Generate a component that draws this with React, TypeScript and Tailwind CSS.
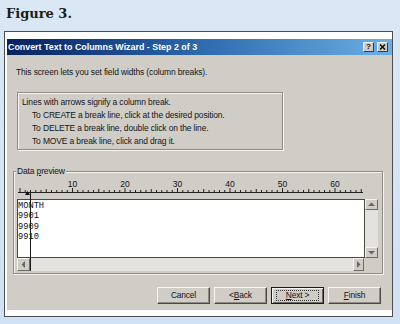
import React from "react";

const ui = { fontFamily: '"Liberation Sans", Arial, sans-serif' };
const mono = { fontFamily: '"Liberation Mono", "Courier New", monospace' };

function Ruler() {
  const ticks: React.ReactNode[] = [];
  const x0 = 3; // position 0 relative to svg (svg starts at x=17)
  const step = 5.25;
  for (let i = 0; i <= 65; i++) {
    const x = x0 + i * step;
    const h = i % 10 === 0 ? 4 : i % 5 === 0 ? 3 : 2;
    ticks.push(<line key={i} x1={x} x2={x} y1={14 - h} y2={14} stroke="#222" strokeWidth={1} />);
  }
  const labels = [10, 20, 30, 40, 50, 60];
  return (
    <svg width="361" height="21" className="block">
      <line x1={1} x2={346} y1={14.5} y2={14.5} stroke="#222" strokeWidth={1} />
      {ticks}
      {labels.map((n) => (
        <text key={n} x={x0 + n * step} y={9} textAnchor="middle" fontSize="8.5" fill="#111" style={ui}>
          {n}
        </text>
      ))}
      <polygon points="10.5,13 8,17 13,17" fill="#111" />
    </svg>
  );
}

function Arrow({ dir }: { dir: "up" | "down" | "left" | "right" }) {
  const pts =
    dir === "up" ? "1,5 4.5,1.5 8,5" : dir === "down" ? "1,2 4.5,5.5 8,2" : dir === "left" ? "5,1 1.5,4.5 5,8" : "2,1 5.5,4.5 2,8";
  const w = dir === "up" || dir === "down" ? 9 : 7;
  const h = dir === "up" || dir === "down" ? 7 : 9;
  return (
    <svg width={w} height={h} viewBox={`0 0 ${w} ${h}`}>
      <polygon points={pts} fill="#666" />
    </svg>
  );
}

function SBtn({ dir, cls }: { dir: "up" | "down" | "left" | "right"; cls: string }) {
  return (
    <div
      className={`flex items-center justify-center bg-[#d0cdc7] border border-t-[#f4f3f0] border-l-[#f4f3f0] border-r-[#6e6b66] border-b-[#6e6b66] ${cls}`}
    >
      <Arrow dir={dir} />
    </div>
  );
}

function Btn({ children, def }: { children: React.ReactNode; def?: boolean }) {
  return (
    <div
      className={`w-[53px] h-[17px] flex items-center justify-center text-[8.4px] text-[#111] bg-[#d0cdc7] ${
        def
          ? "border border-[#1a1a1a] shadow-[inset_1px_1px_0_#f6f5f2,inset_-1px_-1px_0_#6e6b66]"
          : "border border-t-[#f6f5f2] border-l-[#f6f5f2] border-r-[#4a4845] border-b-[#4a4845] shadow-[inset_-1px_-1px_0_#8e8b86]"
      }`}
      style={ui}
    >
      {def ? (
        <div className="w-[43px] h-[11px] border border-dotted border-[#333] flex items-center justify-center">{children}</div>
      ) : (
        children
      )}
    </div>
  );
}

export default function App() {
  return (
    <div className="w-[400px] h-[324px] overflow-hidden bg-gradient-to-b from-[#dae8f5] to-[#cfe1f2]">
      <div
        className="h-[31px] pl-[6px] pt-[5px] text-[13px] font-bold text-[#1c1c1c] leading-[18px]"
        style={{ fontFamily: '"DejaVu Serif", "Liberation Serif", serif' }}
      >
        Figure 3.
      </div>
      <div className="ml-[4px] w-[389px] border border-[#4f4f52] bg-white pt-[7px] pl-[2px] pb-[6px]">
        {/* Title bar */}
        <div className="h-[16px] flex items-center bg-gradient-to-r from-[#08215f] via-[#2d6aae] to-[#6cafe4] pl-[1px] pr-[4px]">
          <span className="text-white font-bold text-[8.9px] leading-none" style={ui}>
            Convert Text to Columns Wizard - Step 2 of 3
          </span>
          <div className="ml-auto flex gap-[3px]">
            <div className="w-[11px] h-[10px] bg-[#cfccc6] border border-t-[#f4f3f0] border-l-[#f4f3f0] border-r-[#3e3c3a] border-b-[#3e3c3a] flex items-center justify-center text-[8px] font-bold leading-none text-[#111]" style={ui}>
              ?
            </div>
            <div className="w-[11px] h-[10px] bg-[#cfccc6] border border-t-[#f4f3f0] border-l-[#f4f3f0] border-r-[#3e3c3a] border-b-[#3e3c3a] flex items-center justify-center">
              <svg width="7" height="6" viewBox="0 0 7 6">
                <path d="M1 0.5 L6 5.5 M6 0.5 L1 5.5" stroke="#111" strokeWidth="1.5" />
              </svg>
            </div>
          </div>
        </div>
        {/* Body */}
        <div className="h-[255px] bg-[#d0cdc7] flex flex-col text-[#151515] text-[8.5px] tracking-[-0.15px]" style={ui}>
          <div className="mt-[11px] ml-[9px] h-[12px] leading-[12px]">
            This screen lets you set field widths (column breaks).
          </div>
          <div className="mt-[14px] ml-[10px] w-[266px] h-[58px] border border-[#8f8c86] shadow-[inset_1px_1px_0_#f6f5f2,1px_1px_0_#f6f5f2] pt-[3px] pl-[4px] leading-[13px]">
            <div>Lines with arrows signify a column break.</div>
            <div className="pl-[10px]">To CREATE a break line, click at the desired position.</div>
            <div className="pl-[10px]">To DELETE a break line, double click on the line.</div>
            <div className="pl-[10px]">To MOVE a break line, click and drag it.</div>
          </div>
          {/* Data preview group */}
          <div className="relative mt-[21px] ml-[6px] w-[370px] h-[103px] border border-[#8f8c86] shadow-[inset_1px_1px_0_#f6f5f2,1px_1px_0_#f6f5f2] pl-[3px] pt-[6px] tracking-normal">
            <div className="absolute left-[2px] top-[-6px] px-[1px] bg-[#d0cdc7] leading-[11px] tracking-[-0.15px]">
              Data <span className="underline">p</span>review
            </div>
            <Ruler />
            <div className="flex">
              <div
                className="w-[347px] h-[59px] bg-white border border-[#4a4845] border-r-0 pt-[1px] text-[8.7px] leading-[10.4px] text-[#111]"
                style={mono}
              >
                <div>MONTH</div>
                <div>9901</div>
                <div>9909</div>
                <div>9910</div>
              </div>
              <div className="w-[14px] h-[59px] bg-[#e4e2de] flex flex-col justify-between border-l border-[#4a4845]">
                <SBtn dir="up" cls="h-[11px] w-[13px]" />
                <SBtn dir="down" cls="h-[11px] w-[13px]" />
              </div>
            </div>
            <div className="flex h-[13px]">
              <div className="w-[347px] h-[13px] bg-[#e4e2de] flex justify-between">
                <SBtn dir="left" cls="w-[13px] h-[13px]" />
                <SBtn dir="right" cls="w-[11px] h-[13px]" />
              </div>
              <div className="w-[14px] h-[13px] bg-[#d0cdc7]" />
            </div>
            <div className="absolute left-[16px] top-[21px] w-[1px] h-[78px] bg-[#1a1a1a]" />
          </div>
          {/* Buttons */}
          <div className="mt-[13px] ml-[150px] flex gap-[4px]">
            <Btn>Cancel</Btn>
            <Btn>
              &lt; <span className="underline">B</span>ack
            </Btn>
            <Btn def>
              <span className="underline">N</span>ext &gt;
            </Btn>
            <Btn>
              <span className="underline">F</span>inish
            </Btn>
          </div>
        </div>
      </div>
    </div>
  );
}
